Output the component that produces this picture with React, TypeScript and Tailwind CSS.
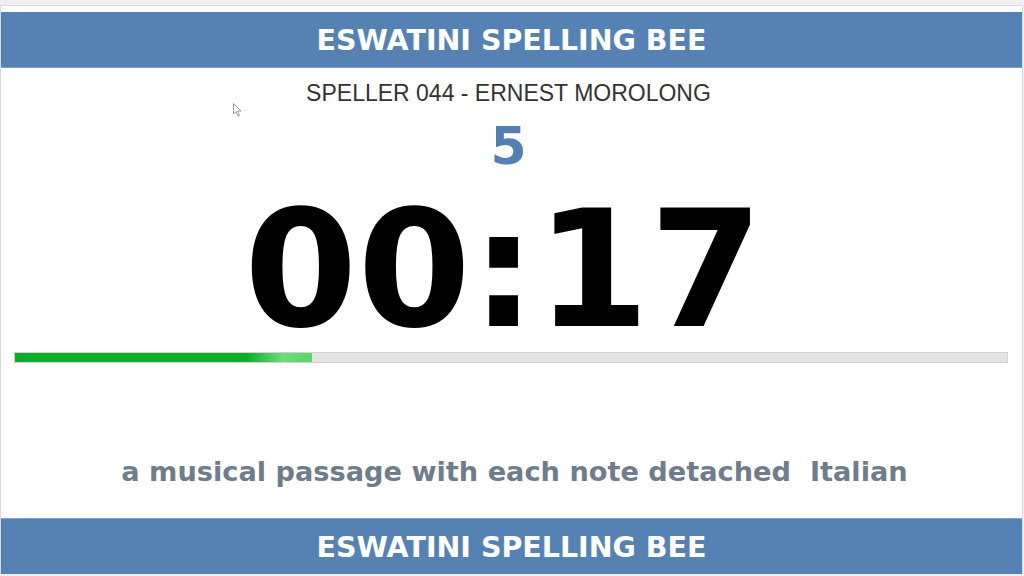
export default function App() {
  const elapsedPct = 29.9;

  return (
    <div className="w-[1024px] h-[576px] bg-[#f0f0f0] pt-[5px] pr-[1px] pb-[2px] overflow-hidden">
      <div className="relative h-full flex flex-col bg-white border-l border-t border-r border-[#dadada]">
        <div className="mt-[6px] h-[56px] bg-[#5682b3] border-b border-[#7fa1c7] flex items-center justify-center pt-[4px]">
          <span className="text-white font-bold text-[28.5px] leading-none font-['DejaVu_Sans',Verdana,sans-serif]">
            ESWATINI SPELLING BEE
          </span>
        </div>

        <div className="mt-[14px] pr-[6px] text-center text-[#333333] text-[23px] leading-none font-['Liberation_Sans',Arial,sans-serif]">
          SPELLER 044 - ERNEST MOROLONG
        </div>

        <div className="mt-[15px] pr-[6px] text-center text-[#5480b1] font-bold text-[52px] leading-none font-['DejaVu_Sans',Verdana,sans-serif]">
          5
        </div>

        <div className="mt-[16px] pr-[16px] text-center text-black font-bold text-[163px] leading-none font-['DejaVu_Sans',Verdana,sans-serif]">
          00:17
        </div>

        <div className="mt-[1px] ml-[13px] mr-[14px] h-[11px] bg-[#e3e4e3] border border-[#d2d2d2] overflow-hidden">
          <div
            className="h-full bg-[linear-gradient(to_right,#0aae2a_0%,#0aae2a_78%,#6ddd79_90%,#5cd468_100%)]"
            style={{ width: `${elapsedPct}%` }}
          />
        </div>

        <div className="mt-[95px] pl-[6px] text-center text-[#6e7c8c] font-bold text-[27.2px] leading-none whitespace-pre font-['DejaVu_Sans',Verdana,sans-serif]">
          a musical passage with each note detached  Italian
        </div>

        <div className="mt-auto h-[56px] bg-[#5682b3] border-t border-[#7fa1c7] flex items-center justify-center pt-[4px]">
          <span className="text-white font-bold text-[28.5px] leading-none font-['DejaVu_Sans',Verdana,sans-serif]">
            ESWATINI SPELLING BEE
          </span>
        </div>

        {/* mouse pointer left on screen */}
        <svg className="absolute left-[232px] top-[97px]" width="9" height="14" viewBox="0 0 9 14">
          <path
            d="M0.5 0.5 L0.5 11 L3 8.5 L5 13 L6.5 12.3 L4.6 8 L8 8 Z"
            fill="#ffffff"
            stroke="#9a9a9a"
            strokeWidth="1"
          />
        </svg>
      </div>
    </div>
  );
}
